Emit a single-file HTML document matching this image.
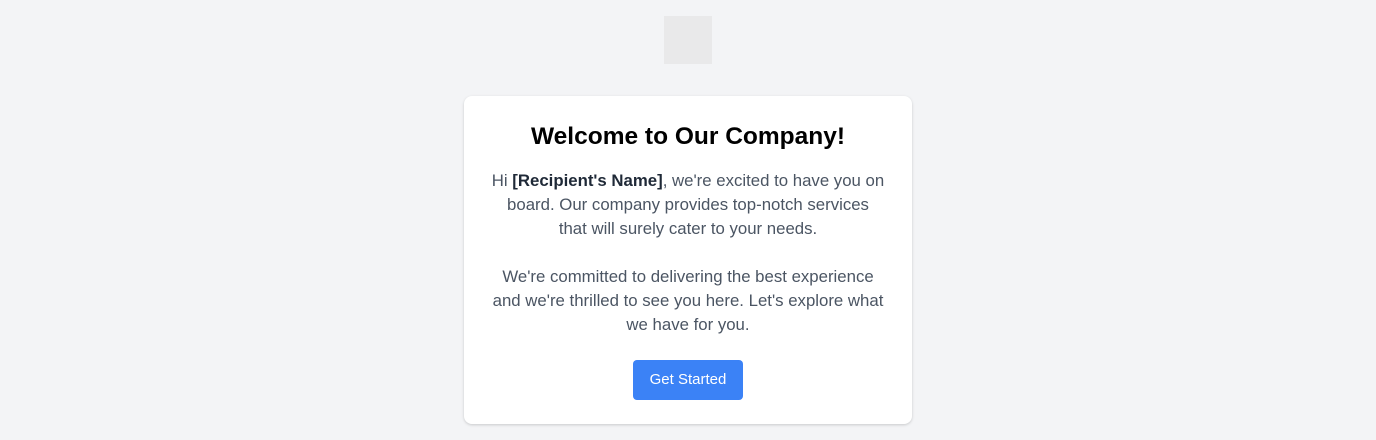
<!DOCTYPE html>
<html><head><meta charset="utf-8"><style>
html,body{margin:0;padding:0;}
body{width:1376px;height:440px;background:#f3f4f6;font-family:"Liberation Sans",Arial,sans-serif;position:relative;overflow:hidden;}
.logo{position:absolute;left:664px;top:16px;width:48px;height:48px;background:#e9e9ea;}
.card{position:absolute;left:464px;top:96px;width:448px;height:328px;background:#fff;border-radius:8px;box-shadow:0 1px 3px rgba(0,0,0,.12),0 1px 2px rgba(0,0,0,.06);text-align:center;}
h1{margin:0;position:absolute;left:0;width:100%;font-size:24.5px;line-height:30px;font-weight:bold;color:#000;}
.p{position:absolute;left:0;width:100%;font-size:16.8px;line-height:24px;color:#4b5563;white-space:nowrap;}
.p b{color:#1f2937;}
.btn{position:absolute;left:169px;top:264px;width:110px;height:40px;background:#3b82f6;border-radius:4px;color:#fff;font-size:15px;line-height:40px;}
</style></head><body>
<div class="logo"></div>
<div class="card">
<h1 style="top:26px">Welcome to Our Company!</h1>
<div class="p" style="top:73px">Hi <b>[Recipient's Name]</b>, we're excited to have you on<br>board. Our company provides top-notch services<br>that will surely cater to your needs.</div>
<div class="p" style="top:169px">We're committed to delivering the best experience<br>and we're thrilled to see you here. Let's explore what<br>we have for you.</div>
<div class="btn">Get Started</div>
</div>
</body></html>
